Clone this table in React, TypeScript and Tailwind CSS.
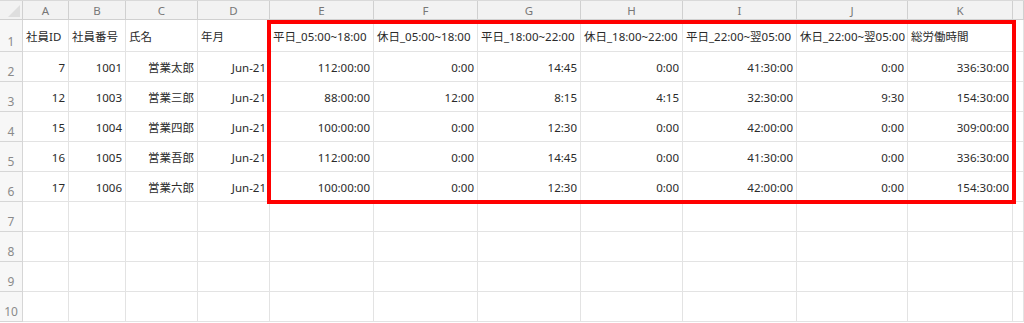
import React from "react";

const columns = ["A", "B", "C", "D", "E", "F", "G", "H", "I", "J", "K", ""];

const header = [
  "社員ID",
  "社員番号",
  "氏名",
  "年月",
  "平日_05:00~18:00",
  "休日_05:00~18:00",
  "平日_18:00~22:00",
  "休日_18:00~22:00",
  "平日_22:00~翌05:00",
  "休日_22:00~翌05:00",
  "総労働時間",
];

const rows = [
  ["7", "1001", "営業太郎", "Jun-21", "112:00:00", "0:00", "14:45", "0:00", "41:30:00", "0:00", "336:30:00"],
  ["12", "1003", "営業三郎", "Jun-21", "88:00:00", "12:00", "8:15", "4:15", "32:30:00", "9:30", "154:30:00"],
  ["15", "1004", "営業四郎", "Jun-21", "100:00:00", "0:00", "12:30", "0:00", "42:00:00", "0:00", "309:00:00"],
  ["16", "1005", "営業吾郎", "Jun-21", "112:00:00", "0:00", "14:45", "0:00", "41:30:00", "0:00", "336:30:00"],
  ["17", "1006", "営業六郎", "Jun-21", "100:00:00", "0:00", "12:30", "0:00", "42:00:00", "0:00", "154:30:00"],
];

const font = { fontFamily: '"Noto Sans", "Noto Sans CJK JP", sans-serif' };

function RowNum({ n, tall }: { n: number; tall?: boolean }) {
  return (
    <div
      className={
        "flex items-end justify-center border-r border-b border-[#d6d6d6] bg-[#f7f7f7] pb-[3px] text-[12px] leading-none text-[#8a8a8a] " +
        (tall ? "h-[32px]" : "h-[30px]")
      }
    >
      {n}
    </div>
  );
}

function Cell({ text, right, tall }: { text?: string; right?: boolean; tall?: boolean }) {
  return (
    <div
      className={
        "flex items-center overflow-visible whitespace-nowrap border-r border-b border-[#e3e3e3] pt-[3px] text-[11.5px] leading-none text-[#2a2a2a] " +
        (right ? "justify-end pr-[3px] " : "pl-[3px] ") +
        (tall ? "h-[32px]" : "h-[30px]")
      }
    >
      {text}
    </div>
  );
}

export default function App() {
  return (
    <div className="relative h-[323px] w-[1024px] overflow-hidden bg-white" style={font}>
      <div className="grid grid-cols-[23px_46px_57px_72px_72px_104px_104px_103px_102px_114px_111px_105px_1fr] border-t border-[#d9d9d9]">
        {/* column header row */}
        <div className="relative h-[19px] border-r border-b border-[#d0d0d0] bg-[#f2f2f2]">
          <svg className="absolute right-[2px] bottom-[2px]" width="12" height="12" viewBox="0 0 12 12">
            <polygon points="12,0 12,12 0,12" fill="#dedede" />
          </svg>
        </div>
        {columns.map((c, i) => (
          <div
            key={"h" + i}
            className="flex h-[19px] items-center justify-center border-r border-b border-[#d0d0d0] bg-[#f2f2f2] pt-[2px] text-[11.5px] leading-none text-[#777]"
          >
            {c}
          </div>
        ))}

        {/* row 1: labels */}
        <RowNum n={1} tall />
        {header.map((h, i) => (
          <Cell key={"l" + i} text={h} tall />
        ))}
        <Cell tall />

        {/* data rows */}
        {rows.map((r, ri) => (
          <React.Fragment key={"r" + ri}>
            <RowNum n={ri + 2} />
            {r.map((v, ci) => (
              <Cell key={ci} text={v} right />
            ))}
            <Cell />
          </React.Fragment>
        ))}

        {/* empty rows */}
        {[7, 8, 9, 10].map((n) => (
          <React.Fragment key={"e" + n}>
            <RowNum n={n} />
            {columns.map((_, ci) => (
              <Cell key={ci} />
            ))}
          </React.Fragment>
        ))}
      </div>

      {/* highlight box */}
      <div className="pointer-events-none absolute left-[267px] top-[20px] h-[184px] w-[749px] border-4 border-[#ff0000]" />
    </div>
  );
}
